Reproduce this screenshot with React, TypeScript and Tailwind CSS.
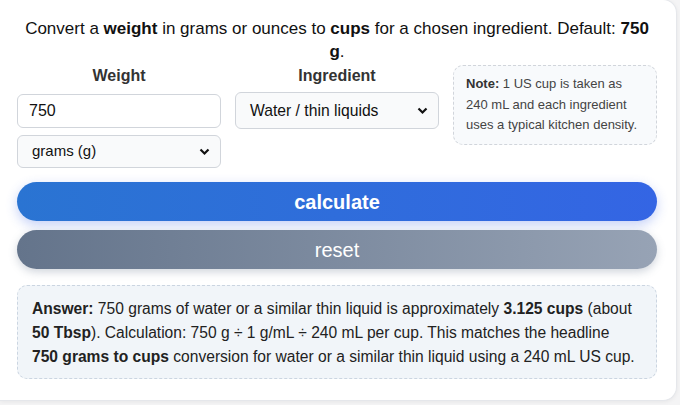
import React from "react";

export default function App() {
  return (
    <div
      className="w-[680px] h-[405px] overflow-hidden bg-[#f4f4f5]"
      style={{ fontFamily: '"Liberation Sans", Arial, sans-serif' }}
    >
      <div className="w-[677px] h-[402px] -mt-px bg-white rounded-tr-[14px] rounded-br-[14px] border border-l-0 border-[#e5e7eb] shadow-[0_1px_4px_rgba(0,0,0,0.06)] pl-[17px] pr-[19px] pt-[17px]">
        <p className="text-center text-[17px] leading-[23px] text-[#111]">
          Convert a <b>weight</b> in grams or ounces to <b>cups</b> for a chosen ingredient. Default: <b>750 g</b>.
        </p>
        <div className="grid grid-cols-3 gap-x-[14px]">
          <div className="flex flex-col">
            <div className="text-center font-bold text-[16px] leading-[20px] text-[#333] mt-[3px]">Weight</div>
            <input
              defaultValue="750"
              className="mt-[8px] h-[34px] rounded-[6px] border border-[#d1d5db] bg-white px-[11px] text-[16px] text-[#111] outline-none"
            />
            <div className="mt-[7px] h-[33px] rounded-[6px] border border-[#d1d5db] bg-[#f9fafb] flex items-center justify-between pl-[14px] pr-[10px] text-[15px] text-[#111]">
              <span>grams (g)</span>
              <svg width="11" height="8" viewBox="0 0 11 8"><path d="M1.5 1.5 L5.5 5.5 L9.5 1.5" stroke="#111" strokeWidth="2.2" fill="none" /></svg>
            </div>
          </div>
          <div className="flex flex-col">
            <div className="text-center font-bold text-[16px] leading-[20px] text-[#333] mt-[3px]">Ingredient</div>
            <div className="mt-[6px] h-[37px] rounded-[6px] border border-[#d1d5db] bg-[#f9fafb] flex items-center justify-between pl-[14px] pr-[10px] text-[15.7px] text-[#111]">
              <span>Water / thin liquids</span>
              <svg width="11" height="8" viewBox="0 0 11 8"><path d="M1.5 1.5 L5.5 5.5 L9.5 1.5" stroke="#111" strokeWidth="2.2" fill="none" /></svg>
            </div>
          </div>
          <div className="mt-[2px] h-[80px] rounded-[10px] border border-dashed border-[#d1d5db] bg-[#f8fafc] px-[12px] pt-[8px] text-[13px] leading-[20.5px] text-[#444]">
            <b className="text-[#333]">Note:</b> 1 US cup is taken as 240 mL and each ingredient uses a typical kitchen density.
          </div>
        </div>
        <button className="mt-[14px] w-full h-[39px] rounded-full text-white font-bold text-[20px] bg-gradient-to-r from-[#2a74d2] to-[#3465e4] shadow-[0_4px_12px_rgba(59,100,230,0.3)]">
          calculate
        </button>
        <button className="mt-[9px] w-full h-[39px] rounded-full text-white text-[20px] bg-gradient-to-r from-[#64748b] to-[#97a3b5] shadow-[0_3px_8px_rgba(100,116,139,0.3)]">
          reset
        </button>
        <div className="mt-[16px] rounded-[10px] border border-dashed border-[#cbd5e1] bg-[#f1f5f9] px-[14px] pt-[11px] pb-[9px] text-[15.6px] leading-[24px] text-[#222]">
          <b>Answer:</b> 750 grams of water or a similar thin liquid is approximately <b>3.125 cups</b> (about
          <br />
          <b>50 Tbsp</b>). Calculation: 750 g ÷ 1 g/mL ÷ 240 mL per cup. This matches the headline
          <br />
          <b>750 grams to cups</b> conversion for water or a similar thin liquid using a 240 mL US cup.
        </div>
      </div>
    </div>
  );
}
